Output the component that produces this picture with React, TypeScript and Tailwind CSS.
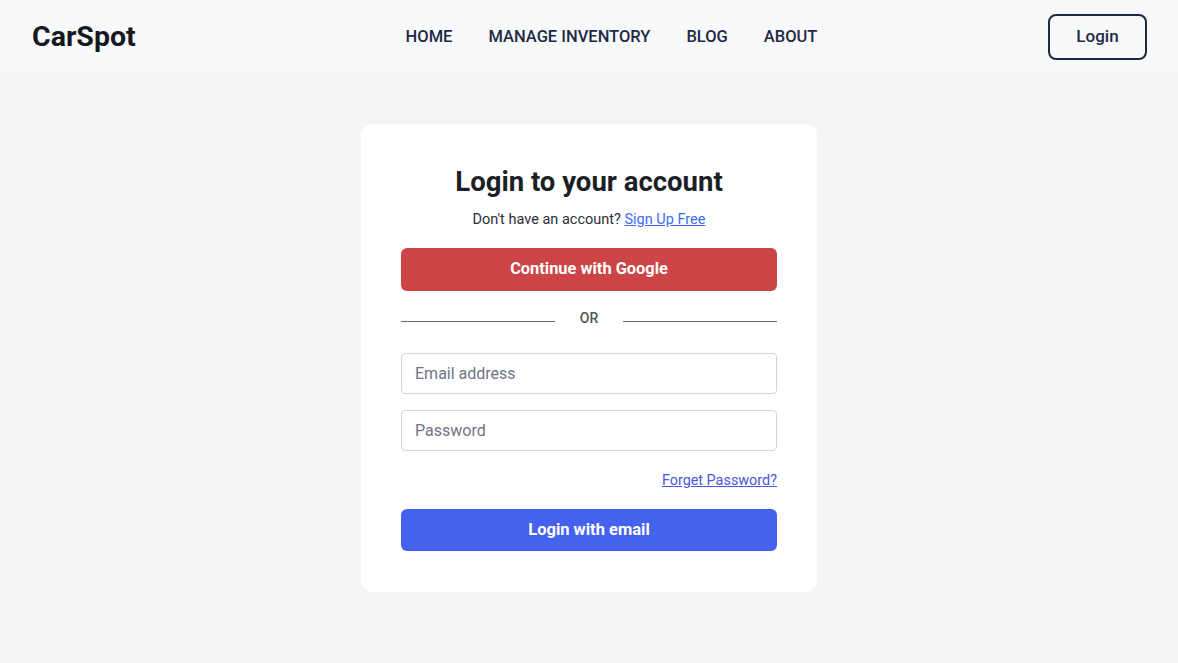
import React from "react";

export default function App() {
  return (
    <div className="min-h-[663px] bg-[#f5f5f5] font-['Roboto',sans-serif]">
      <header className="h-[73px] bg-[#f8f9fb] flex items-center justify-between pl-[32px] pr-[31px]">
        <div className="text-[28.5px] font-bold text-[#16181d] w-[200px] mt-[1px]">CarSpot</div>
        <nav className="flex items-center gap-[36px] text-[16.5px] font-medium text-[#1e2a44] ml-[44px] mt-[2px]">
          <a>HOME</a>
          <a>MANAGE INVENTORY</a>
          <a>BLOG</a>
          <a>ABOUT</a>
        </nav>
        <div className="w-[200px] flex justify-end">
          <button className="w-[99px] h-[46px] border-2 border-[#1e2a44] rounded-[8px] text-[17px] font-medium text-[#1e2a44]">
            Login
          </button>
        </div>
      </header>
      <main className="flex justify-center pt-[51px]">
        <div className="w-[456px] bg-white rounded-[12px] px-[40px] pt-[40px] pb-[41px] flex flex-col">
          <h1 className="text-center text-[27.5px] font-bold text-[#1c1f26] leading-[36px]">Login to your account</h1>
          <p className="text-center text-[14.5px] text-[#2b2f38] mt-[11px] leading-[18px]">
            Don't have an account? <a className="text-[#3b6ef5] underline">Sign Up Free</a>
          </p>
          <button className="mt-[19px] h-[43px] rounded-[6px] bg-[#cc4446] text-white text-[16.4px] font-bold">
            Continue with Google
          </button>
          <div className="flex items-center mt-[19px] h-[16px]">
            <div className="flex-1 h-px bg-[#6b6b6b] mt-[6px]"></div>
            <span className="w-[68px] text-center text-[14px] font-medium text-[#555]">OR</span>
            <div className="flex-1 h-px bg-[#6b6b6b] mt-[6px]"></div>
          </div>
          <input
            className="mt-[27px] h-[41px] border border-[#cfd4dc] rounded-[4px] px-[13px] text-[16px] outline-none placeholder:text-[#6f7585]"
            placeholder="Email address"
          />
          <input
            className="mt-[16px] h-[41px] border border-[#cfd4dc] rounded-[4px] px-[13px] text-[16px] outline-none placeholder:text-[#6f7585]"
            placeholder="Password"
            type="password"
          />
          <div className="flex justify-end mt-[21px]">
            <a className="text-[14.4px] text-[#4a55e0] underline leading-[18px]">Forget Password?</a>
          </div>
          <button className="mt-[19px] h-[42px] rounded-[6px] bg-[#4562ef] text-white text-[16.5px] font-bold">
            Login with email
          </button>
        </div>
      </main>
    </div>
  );
}
